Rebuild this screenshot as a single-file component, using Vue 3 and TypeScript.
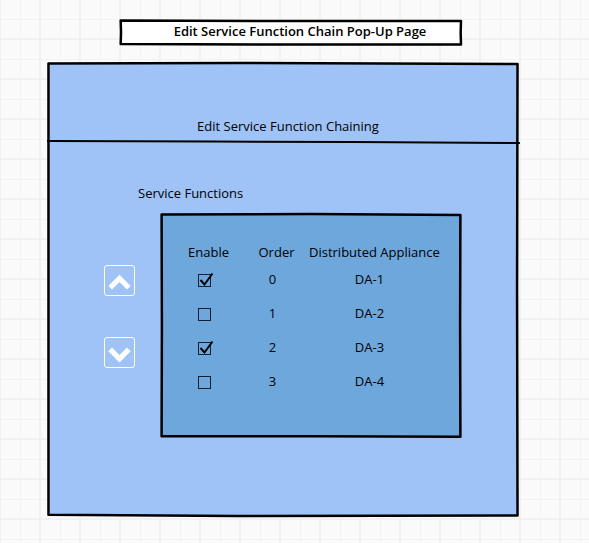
<script setup lang="ts">
import { ref } from 'vue'

interface ServiceFunction {
  id: number
  enabled: boolean
  appliance: string
}

const functions = ref<ServiceFunction[]>([
  { id: 1, enabled: true, appliance: 'DA-1' },
  { id: 2, enabled: false, appliance: 'DA-2' },
  { id: 3, enabled: true, appliance: 'DA-3' },
  { id: 4, enabled: false, appliance: 'DA-4' },
])

const current = ref(0)

// Swaps the current row with its neighbour in the chain.
function move(step: number): void {
  const target = current.value + step
  if (target < 0 || target >= functions.value.length) return
  const list = functions.value
  const row = list[current.value]
  list[current.value] = list[target]
  list[target] = row
  current.value = target
}
</script>

<template>
  <main class="page">
    <h1 class="title sketch">
      <svg class="outline" viewBox="0 0 100 100" preserveAspectRatio="none" aria-hidden="true">
        <path d="M.2 2 L45 4 L100 4 L99.900 50 L100 98 L40 98 L.2 96 L.3 50 Z" />
      </svg>
      Edit Service Function Chain Pop-Up Page
    </h1>

    <section class="dialog sketch">
      <svg class="outline" viewBox="0 0 100 100" preserveAspectRatio="none" aria-hidden="true">
        <path d="M.1 .1 L40 0 L99.900 .2 L99.800 50 L99.900 99.900 L40 100 L.1 99.700 L.1 50 Z" />
      </svg>

      <header class="dialog-head">
        <h2 class="heading">Edit Service Function Chaining</h2>
        <svg class="divider" viewBox="0 0 100 4" preserveAspectRatio="none" aria-hidden="true">
          <path d="M-.2 1 L35 1.500 L65 2 L100.400 3" />
        </svg>
      </header>

      <div class="dialog-body">
        <h3 class="heading label">Service Functions</h3>
        <div class="editor">
          <div class="arrows">
            <button type="button" class="arrow" aria-label="Move up" @click="move(-1)">
              <svg viewBox="0 0 28 28" aria-hidden="true"><path d="M5 21 L14 12 L23 21" /></svg>
            </button>
            <button type="button" class="arrow" aria-label="Move down" @click="move(1)">
              <svg viewBox="0 0 28 28" aria-hidden="true"><path d="M5 11 L14 20 L23 11" /></svg>
            </button>
          </div>

          <div class="list sketch">
            <svg class="outline" viewBox="0 0 100 100" preserveAspectRatio="none" aria-hidden="true">
              <path d="M.2 .2 L50 0 L99.800 .4 L99.700 50 L99.800 99.900 L50 99.700 L.2 99.700 L.3 50 Z" />
            </svg>
            <table>
              <colgroup>
                <col class="col-enable" />
                <col class="col-order" />
                <col />
              </colgroup>
              <thead>
                <tr>
                  <th scope="col">Enable</th>
                  <th scope="col">Order</th>
                  <th scope="col">Distributed Appliance</th>
                </tr>
              </thead>
              <tbody>
                <tr v-for="(item, index) in functions" :key="item.id" @click="current = index">
                  <td>
                    <label class="tick">
                      <input v-model="item.enabled" type="checkbox" :aria-label="`Enable ${item.appliance}`" />
                      <svg v-if="item.enabled" viewBox="0 0 17 16" aria-hidden="true">
                        <path d="M2.500 8 L6.500 12.500 L14.500 1.500" />
                      </svg>
                    </label>
                  </td>
                  <td>{{ index }}</td>
                  <td>{{ item.appliance }}</td>
                </tr>
              </tbody>
            </table>
          </div>
        </div>
      </div>
    </section>
  </main>
</template>

<style>
body {
  min-height: 100vh;
  background-color: #fafafa;
  background-image:
    linear-gradient(#f1f1f1 2px, transparent 2px),
    linear-gradient(90deg, #f1f1f1 2px, transparent 2px),
    linear-gradient(#f3f3f3 1px, transparent 1px),
    linear-gradient(90deg, #f3f3f3 1px, transparent 1px);
  background-size: 40px 40px;
  background-position: 0 38px, -1px 0, 0 19px, 20px 0;
}
</style>

<style scoped>
.page {
  box-sizing: border-box;
  padding: 20px 71px 27px 48px;
  font-family: "Open Sans", "Noto Sans", sans-serif;
  font-size: 13px;
  line-height: 16px;
  color: #000;
}

.sketch {
  position: relative;
  box-sizing: border-box;
}

.outline {
  position: absolute;
  inset: 0;
  width: 100%;
  height: 100%;
  overflow: visible;
  pointer-events: none;
}

.outline path,
.divider path {
  fill: none;
  stroke: #000;
  stroke-width: 2.5px;
  stroke-linejoin: round;
  vector-effect: non-scaling-stroke;
}

.title {
  margin: 0 57px 18px 72px;
  padding: 3px 0 6px 19px;
  background: #fff;
  font-size: 13px;
  line-height: 16px;
  font-weight: 600;
  text-align: center;
}

.dialog {
  background: #9fc3f7;
}

.heading {
  margin: 0;
  font-size: 13px;
  line-height: 16px;
  font-weight: 400;
}

.dialog-head {
  padding-top: 55px;
  text-align: center;
}

.dialog-head .heading {
  padding: 0 0 6px 10px;
}

.divider {
  display: block;
  width: 100%;
  height: 4px;
  overflow: visible;
}

.divider path {
  stroke-width: 2px;
}

.dialog-body {
  padding: 41px 57px 79px 56px;
}

.label {
  padding: 0 0 13px 34px;
}

.editor {
  display: flex;
  gap: 26px;
}

.arrows {
  display: flex;
  flex-direction: column;
  gap: 41px;
  padding-top: 51px;
}

.arrow {
  display: block;
  box-sizing: border-box;
  width: 31px;
  height: 31px;
  padding: 0;
  border: 1px solid #fff;
  border-radius: 3px;
  background: transparent;
  cursor: pointer;
}

.arrow svg {
  display: block;
  width: 29px;
  height: 29px;
}

.arrow path {
  fill: none;
  stroke: #fff;
  stroke-width: 5px;
}

.list {
  flex: 1;
  padding: 30px 23px 30px 12px;
  background: #6ea7dc;
}

table {
  width: 100%;
  table-layout: fixed;
  border-collapse: collapse;
}

.col-enable {
  width: 71px;
}

.col-order {
  width: 65px;
}

th,
td {
  padding: 0;
  font-weight: 400;
  text-align: center;
  white-space: nowrap;
  vertical-align: top;
}

th {
  height: 27px;
}

td {
  height: 34px;
  padding-right: 8px;
}

.tick {
  position: relative;
  display: block;
  width: 13px;
  margin: 3px auto 0;
}

.tick input {
  display: block;
  box-sizing: border-box;
  width: 13px;
  height: 13px;
  margin: 0;
  border: 1px solid #10202c;
  appearance: none;
}

.tick svg {
  position: absolute;
  top: -2px;
  left: 0;
  width: 17px;
  height: 16px;
  pointer-events: none;
}

.tick path {
  fill: none;
  stroke: #000;
  stroke-width: 2px;
}
</style>
